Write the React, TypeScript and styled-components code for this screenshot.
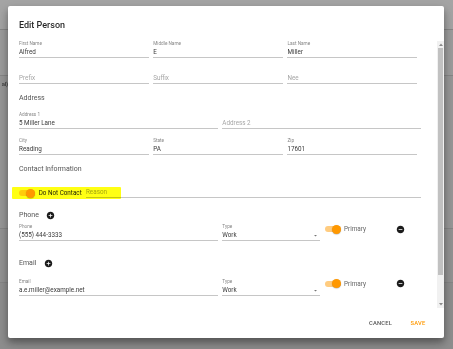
import React from "react";
import styled, { createGlobalStyle } from "styled-components";

const Global = createGlobalStyle`
  html, body { margin: 0; padding: 0; }
  body {
    width: 453px;
    height: 349px;
    overflow: hidden;
    background: #8e8e8e;
    font-family: Roboto, "Noto Sans", Arial, sans-serif;
  }
  * { box-sizing: border-box; }
`;

/* ---------- dimmed page behind the dialog ---------- */
const Page = styled.div`
  position: relative;
  width: 453px;
  height: 349px;
  display: flex;
  flex-direction: column;
  overflow: hidden;
`;

const Band = styled.div<{ $h?: number; $bg: string; $line?: boolean }>`
  flex: ${(p) => (p.$h ? `0 0 ${p.$h}px` : "1 1 auto")};
  background: ${(p) => p.$bg};
  border-bottom: ${(p) => (p.$line ? "1px solid #868686" : "none")};
  display: flex;
`;

const EdgeText = styled.div`
  width: 8px;
  display: flex;
  justify-content: flex-end;
  padding-top: 4px;
  white-space: nowrap;
  font-size: 6px;
  line-height: 7px;
  font-weight: 700;
  letter-spacing: -0.2px;
  color: #4a4a4a;
`;

/* ---------- dialog ---------- */
const Dialog = styled.div`
  position: absolute;
  left: 8px;
  top: 6px;
  width: 436px;
  height: 332px;
  background: #fff;
  border-radius: 2px;
  box-shadow: 0 4px 6px rgba(0, 0, 0, 0.28), 0 6px 14px rgba(0, 0, 0, 0.18);
  display: flex;
  flex-direction: column;
  overflow: hidden;
`;

const Title = styled.h2`
  margin: 0;
  padding: 14px 11px 11px;
  font-size: 9px;
  line-height: 10px;
  font-weight: 500;
  color: rgba(0, 0, 0, 0.85);
`;

const Body = styled.div`
  flex: 1 1 auto;
  min-height: 0;
  display: flex;
`;

const Scroll = styled.div`
  flex: 1 1 auto;
  min-width: 0;
  padding: 0 16px 0 11px;
  overflow: hidden;
  display: flex;
  flex-direction: column;
`;

const ScrollBar = styled.div`
  flex: 0 0 7px;
  background: #f1f1f1;
  display: flex;
  flex-direction: column;
`;

const ScrollBtn = styled.div`
  flex: 0 0 7px;
  display: flex;
  align-items: center;
  justify-content: center;
`;

const ScrollThumb = styled.div`
  flex: 0 0 227px;
  margin: 0 1px;
  background: #c1c1c1;
`;

const ScrollRest = styled.div`
  flex: 1 1 auto;
`;

const Footer = styled.div`
  flex: 0 0 30px;
  display: flex;
  justify-content: flex-end;
  align-items: center;
  gap: 7px;
  padding-right: 11px;
`;

const Button = styled.button<{ $color: string }>`
  min-width: 30px;
  height: 12px;
  padding: 0 4px;
  border: none;
  background: none;
  font-family: Roboto, Arial, sans-serif;
  font-size: 5.8px;
  line-height: 12px;
  font-weight: 500;
  letter-spacing: 0.17px;
  text-transform: uppercase;
  color: ${(p) => p.$color};
`;

/* ---------- form parts ---------- */
const Grid3 = styled.div<{ $mt: number }>`
  display: grid;
  grid-template-columns: repeat(3, 1fr);
  column-gap: 4.7px;
  margin-right: 4px;
  margin-top: ${(p) => p.$mt}px;
`;

const Grid2 = styled.div<{ $mt: number }>`
  display: grid;
  grid-template-columns: repeat(2, 1fr);
  column-gap: 4.7px;
  margin-top: ${(p) => p.$mt}px;
`;

const ContactRow = styled.div<{ $mt: number }>`
  display: grid;
  grid-template-columns: 198.6px 97.7px 1fr;
  column-gap: 4.7px;
  align-items: start;
  margin-top: ${(p) => p.$mt}px;
`;

const Heading = styled.div<{ $mt: number }>`
  height: 10px;
  margin-top: ${(p) => p.$mt}px;
  display: flex;
  align-items: center;
  gap: 7.4px;
  font-size: 7px;
  line-height: 10px;
  color: #555;
`;

const FieldBox = styled.div<{ $grow?: boolean }>`
  display: flex;
  flex-direction: column;
  min-width: 0;
  flex: ${(p) => (p.$grow ? "1 1 auto" : "initial")};
`;

const Label = styled.div`
  height: 5px;
  margin-bottom: 2px;
  font-size: 4.7px;
  line-height: 5px;
  color: rgba(0, 0, 0, 0.5);
  white-space: nowrap;
`;

const Value = styled.div<{ $placeholder?: boolean }>`
  height: 10px;
  border-bottom: 1px solid #c6c6c6;
  display: flex;
  align-items: center;
  justify-content: space-between;
  font-size: 6.3px;
  line-height: 9px;
  white-space: nowrap;
  color: ${(p) => (p.$placeholder ? "rgba(0,0,0,0.38)" : "rgba(0,0,0,0.8)")};
`;

const DncRow = styled.div`
  position: relative;
  display: flex;
  align-items: flex-end;
  margin-top: 7px;
`;

const DncGroup = styled.div`
  height: 10px;
  display: flex;
  align-items: center;
  gap: 3.7px;
  margin-right: 4.3px;
`;

const DncText = styled.span`
  font-size: 6.3px;
  color: #1e1e1e;
  white-space: nowrap;
`;

const Highlight = styled.div`
  position: absolute;
  left: -7px;
  top: 5.7px;
  width: 108.7px;
  height: 12.6px;
  border-radius: 1px;
  background: rgba(255, 255, 0, 0.92);
  mix-blend-mode: multiply;
  pointer-events: none;
`;

const Toggle = styled.span`
  position: relative;
  flex: none;
  width: 16px;
  height: 9px;
  display: inline-flex;
  align-items: center;
  justify-content: flex-end;
  &::before {
    content: "";
    position: absolute;
    left: 0;
    right: 0;
    top: 1.5px;
    height: 6px;
    border-radius: 3px;
    background: #ffcc80;
  }
`;

const Thumb = styled.span`
  position: relative;
  width: 9px;
  height: 9px;
  border-radius: 50%;
  background: #ff9800;
  box-shadow: 0 0.5px 1px rgba(0, 0, 0, 0.3);
`;

const PrimaryCol = styled.div`
  height: 9px;
  margin-top: 0.8px;
  display: flex;
  align-items: center;
`;

const PrimaryText = styled.span`
  margin-left: 3.3px;
  font-size: 6.4px;
  color: #666;
  white-space: nowrap;
`;

const IconSlot = styled.span<{ $push?: boolean }>`
  display: inline-flex;
  flex: none;
  margin-left: ${(p) => (p.$push ? "auto" : "0")};
  margin-right: ${(p) => (p.$push ? "16.5px" : "0")};
`;

/* ---------- icons ---------- */
const AddCircle = () => (
  <svg width="9" height="9" viewBox="0 0 24 24">
    <path
      fill="#1c1c1c"
      d="M12 2C6.48 2 2 6.48 2 12s4.48 10 10 10 10-4.48 10-10S17.52 2 12 2zm5 11h-4v4h-2v-4H7v-2h4V7h2v4h4v2z"
    />
  </svg>
);

const RemoveCircle = () => (
  <svg width="9" height="9" viewBox="0 0 24 24">
    <path
      fill="#1c1c1c"
      d="M12 2C6.48 2 2 6.48 2 12s4.48 10 10 10 10-4.48 10-10S17.52 2 12 2zm5 11H7v-2h10v2z"
    />
  </svg>
);

const DropArrow = () => (
  <svg width="7" height="7" viewBox="0 0 24 24" style={{ marginRight: 1 }}>
    <path fill="rgba(0,0,0,0.54)" d="M7 10l5 5 5-5z" />
  </svg>
);

const ScrollArrow = ({ up }: { up?: boolean }) => (
  <svg width="4" height="3" viewBox="0 0 4 3">
    <path fill="#8a8a8a" d={up ? "M0 3L2 0.5 4 3z" : "M0 0L2 2.5 4 0z"} />
  </svg>
);

/* ---------- composites ---------- */
type FieldProps = { label?: string; value?: string; placeholder?: string; select?: boolean; grow?: boolean };

const Field = ({ label, value, placeholder, select, grow }: FieldProps) => (
  <FieldBox $grow={grow}>
    <Label>{label ?? ""}</Label>
    <Value $placeholder={!value}>
      <span>{value ?? placeholder ?? ""}</span>
      {select && <DropArrow />}
    </Value>
  </FieldBox>
);

const Switch = () => (
  <Toggle>
    <Thumb />
  </Toggle>
);

const ContactLine = ({ mt, label, value }: { mt: number; label: string; value: string }) => (
  <ContactRow $mt={mt}>
    <Field label={label} value={value} />
    <Field label="Type" value="Work" select />
    <PrimaryCol>
      <Switch />
      <PrimaryText>Primary</PrimaryText>
      <IconSlot $push>
        <RemoveCircle />
      </IconSlot>
    </PrimaryCol>
  </ContactRow>
);

export default function App() {
  return (
    <>
      <Global />
      <Page>
        <Band $h={30} $bg="#a4a4a4" $line />
        <Band $h={46} $bg="#9c9c9c" $line />
        <Band $h={153} $bg="#979797" $line>
          <EdgeText>al)</EdgeText>
        </Band>
        <Band $h={54} $bg="#939393" $line />
        <Band $bg="#8e8e8e" />

        <Dialog>
          <Title>Edit Person</Title>
          <Body>
            <Scroll>
              <Grid3 $mt={0}>
                <Field label="First Name" value="Alfred" />
                <Field label="Middle Name" value="E" />
                <Field label="Last Name" value="Miller" />
              </Grid3>
              <Grid3 $mt={9}>
                <Field placeholder="Prefix" />
                <Field placeholder="Suffix" />
                <Field placeholder="Nee" />
              </Grid3>

              <Heading $mt={9}>Address</Heading>
              <Grid2 $mt={9}>
                <Field label="Address 1" value="5 Miller Lane" />
                <Field placeholder="Address 2" />
              </Grid2>
              <Grid3 $mt={9}>
                <Field label="City" value="Reading" />
                <Field label="State" value="PA" />
                <Field label="Zip" value="17601" />
              </Grid3>

              <Heading $mt={9}>Contact Information</Heading>
              <DncRow>
                <DncGroup>
                  <Switch />
                  <DncText>Do Not Contact</DncText>
                </DncGroup>
                <Field placeholder="Reason" grow />
                <Highlight />
              </DncRow>

              <Heading $mt={12}>
                Phone
                <IconSlot>
                  <AddCircle />
                </IconSlot>
              </Heading>
              <ContactLine mt={4} label="Phone" value="(555) 444-3333" />

              <Heading $mt={17}>
                Email
                <IconSlot>
                  <AddCircle />
                </IconSlot>
              </Heading>
              <ContactLine mt={10.5} label="Email" value="a.e.miller@example.net" />
            </Scroll>
            <ScrollBar>
              <ScrollBtn>
                <ScrollArrow up />
              </ScrollBtn>
              <ScrollThumb />
              <ScrollRest />
              <ScrollBtn>
                <ScrollArrow />
              </ScrollBtn>
            </ScrollBar>
          </Body>
          <Footer>
            <Button $color="#555">Cancel</Button>
            <Button $color="#ff9800">Save</Button>
          </Footer>
        </Dialog>
      </Page>
    </>
  );
}
